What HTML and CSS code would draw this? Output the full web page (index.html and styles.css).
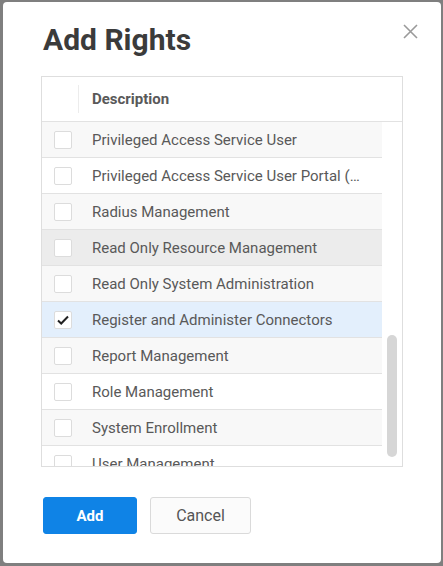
FILE: index.html
```html
<!DOCTYPE html>
<html>
<head>
<meta charset="utf-8">
<link rel="stylesheet" href="styles.css">
</head>
<body>
<div class="dialog">
  <h1 class="title">Add Rights</h1>
  <button class="close" aria-label="Close">
    <svg width="15" height="15" viewBox="0 0 15 15"><path d="M1 1L14 14M14 1L1 14" stroke="#9a9a9a" stroke-width="1.6" fill="none"/></svg>
  </button>
  <div class="grid">
    <div class="head">
      <div class="head-check"></div>
      <div class="head-label">Description</div>
    </div>
    <div class="body">
      <div class="rows">
        <div class="row odd"><span class="cb"></span><span class="label">Privileged Access Service User</span></div>
        <div class="row"><span class="cb"></span><span class="label">Privileged Access Service User Portal (Web)</span></div>
        <div class="row odd"><span class="cb"></span><span class="label">Radius Management</span></div>
        <div class="row hover"><span class="cb"></span><span class="label">Read Only Resource Management</span></div>
        <div class="row odd"><span class="cb"></span><span class="label">Read Only System Administration</span></div>
        <div class="row selected"><span class="cb checked"><svg width="14" height="12" viewBox="0 0 14 12"><path d="M2 6.5L5.2 9.5L12 2.5" stroke="#222" stroke-width="2" fill="none"/></svg></span><span class="label">Register and Administer Connectors</span></div>
        <div class="row odd"><span class="cb"></span><span class="label">Report Management</span></div>
        <div class="row"><span class="cb"></span><span class="label">Role Management</span></div>
        <div class="row odd"><span class="cb"></span><span class="label">System Enrollment</span></div>
        <div class="row"><span class="cb"></span><span class="label">User Management</span></div>
      </div>
      <div class="track"><div class="thumb"></div></div>
    </div>
  </div>
  <div class="actions">
    <button class="btn primary">Add</button>
    <button class="btn secondary">Cancel</button>
  </div>
</div>
</body>
</html>
```
FILE: styles.css
```css
html, body {
  margin: 0;
  padding: 0;
}
body {
  background: #7f7f7f;
  font-family: Roboto, "Liberation Sans", sans-serif;
  width: 443px;
  height: 566px;
  overflow: hidden;
}
.dialog {
  position: relative;
  box-sizing: border-box;
  margin: 2px 0 0 3px;
  width: 438px;
  height: 561px;
  background: #fff;
  border-radius: 4px;
  padding: 20px 38px 0 38px;
}
.title {
  margin: 0 0 0 2px;
  font-size: 30px;
  line-height: 36px;
  font-weight: 700;
  color: #3b3b3b;
}
.close {
  position: absolute;
  top: 21px;
  right: 22px;
  width: 17px;
  height: 17px;
  padding: 1px;
  border: 0;
  background: none;
  display: flex;
}
.grid {
  margin-top: 18px;
  border: 1px solid #dedede;
  height: 391px;
  box-sizing: border-box;
  display: flex;
  flex-direction: column;
}
.head {
  height: 45px;
  box-sizing: border-box;
  border-bottom: 1px solid #e2e2e2;
  display: flex;
  align-items: center;
  flex-shrink: 0;
}
.head-check {
  width: 36px;
  height: 28px;
  border-right: 1px solid #ececec;
}
.head-label {
  padding-left: 13px;
  font-size: 15px;
  font-weight: 700;
  color: #595959;
}
.body {
  flex: 1;
  display: flex;
  overflow: hidden;
}
.rows {
  width: 340px;
  overflow: hidden;
}
.row {
  height: 36px;
  box-sizing: border-box;
  border-bottom: 1px solid #e2e2e2;
  display: flex;
  align-items: center;
  background: #fff;
}
.row.odd { background: #f8f8f8; }
.row.hover { background: #ececec; }
.row.selected { background: #e3effc; }
.cb {
  width: 18px;
  height: 18px;
  box-sizing: border-box;
  margin-left: 12px;
  border: 1px solid #dcdcdc;
  border-radius: 2px;
  background: #fff;
  display: flex;
  align-items: center;
  justify-content: center;
  flex-shrink: 0;
}
.label {
  margin-left: 20px;
  font-size: 15px;
  color: #595959;
  white-space: nowrap;
  overflow: hidden;
  text-overflow: ellipsis;
  min-width: 0;
  padding-right: 18px;
}
.track {
  width: 20px;
  background: #fff;
  padding-top: 213px;
}
.thumb {
  width: 10px;
  height: 122px;
  margin-left: 5px;
  background: #d6d6d6;
  border-radius: 5px;
}
.actions {
  margin-top: 30px;
  display: flex;
  gap: 13px;
  padding-left: 2px;
}
.btn {
  height: 37px;
  border-radius: 3px;
  font-family: Roboto, "Liberation Sans", sans-serif;
  font-size: 15px;
  cursor: pointer;
}
.primary {
  width: 94px;
  background: #0f83e6;
  border: 1px solid #0f83e6;
  color: #fff;
  font-weight: 700;
}
.secondary {
  width: 101px;
  background: #fbfbfb;
  border: 1px solid #dadada;
  color: #555;
  font-size: 16px;
}
```
